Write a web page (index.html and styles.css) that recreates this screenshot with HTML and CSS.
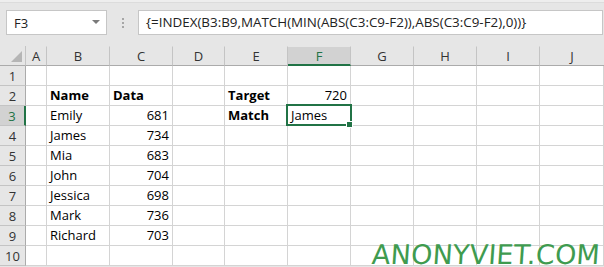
FILE: index.html
```html
<!DOCTYPE html>
<html>
<head>
<meta charset="utf-8">
<link rel="stylesheet" href="styles.css">
</head>
<body>
<div class="app">
  <div class="topstrip"></div>
  <div class="topbar">
    <div class="namebox"><span class="nb-text">F3</span><span class="nb-arrow"></span></div>
    <div class="sep"><span class="dot"></span><span class="dot"></span><span class="dot"></span></div>
    <div class="formula">{=INDEX(B3:B9,MATCH(MIN(ABS(C3:C9-F2)),ABS(C3:C9-F2),0))}</div>
  </div>
  <div class="sheet">
    <div class="hd corner"><span class="tri"></span></div>
    <div class="hd col">A</div><div class="hd col">B</div><div class="hd col">C</div><div class="hd col">D</div><div class="hd col">E</div><div class="hd col active-col">F</div><div class="hd col">G</div><div class="hd col">H</div><div class="hd col">I</div><div class="hd col last">J</div>

    <div class="hd row">1</div><div class="c"></div><div class="c"></div><div class="c"></div><div class="c"></div><div class="c"></div><div class="c"></div><div class="c"></div><div class="c"></div><div class="c"></div><div class="c"></div>

    <div class="hd row">2</div><div class="c"></div><div class="c b">Name</div><div class="c b">Data</div><div class="c"></div><div class="c b">Target</div><div class="c n">720</div><div class="c"></div><div class="c"></div><div class="c"></div><div class="c"></div>

    <div class="hd row active-row">3</div><div class="c"></div><div class="c">Emily</div><div class="c n">681</div><div class="c"></div><div class="c b">Match</div><div class="c sel">James</div><div class="c"></div><div class="c"></div><div class="c"></div><div class="c"></div>

    <div class="hd row">4</div><div class="c"></div><div class="c">James</div><div class="c n">734</div><div class="c"></div><div class="c"></div><div class="c"></div><div class="c"></div><div class="c"></div><div class="c"></div><div class="c"></div>

    <div class="hd row">5</div><div class="c"></div><div class="c">Mia</div><div class="c n">683</div><div class="c"></div><div class="c"></div><div class="c"></div><div class="c"></div><div class="c"></div><div class="c"></div><div class="c"></div>

    <div class="hd row">6</div><div class="c"></div><div class="c">John</div><div class="c n">704</div><div class="c"></div><div class="c"></div><div class="c"></div><div class="c"></div><div class="c"></div><div class="c"></div><div class="c"></div>

    <div class="hd row">7</div><div class="c"></div><div class="c">Jessica</div><div class="c n">698</div><div class="c"></div><div class="c"></div><div class="c"></div><div class="c"></div><div class="c"></div><div class="c"></div><div class="c"></div>

    <div class="hd row">8</div><div class="c"></div><div class="c">Mark</div><div class="c n">736</div><div class="c"></div><div class="c"></div><div class="c"></div><div class="c"></div><div class="c"></div><div class="c"></div><div class="c"></div>

    <div class="hd row">9</div><div class="c"></div><div class="c">Richard</div><div class="c n">703</div><div class="c"></div><div class="c"></div><div class="c"></div><div class="c"></div><div class="c"></div><div class="c"></div><div class="c"></div>

    <div class="hd row">10</div><div class="c"></div><div class="c"></div><div class="c"></div><div class="c"></div><div class="c"></div><div class="c"></div><div class="c"></div><div class="c"></div><div class="c"></div><div class="c"></div>
  </div>
  <div class="watermark">ANONYVIET.COM</div>
</div>
</body>
</html>
```
FILE: styles.css
```css
* { box-sizing: border-box; }
html, body { margin: 0; padding: 0; background: #ffffff; }
.app {
  position: relative;
  width: 604px;
  height: 267px;
  overflow: hidden;
  background: #e6e6e6;
  font-family: "Open Sans", "Liberation Sans", sans-serif;
}
.topstrip {
  height: 3px;
  background: #eeeeee;
  border-bottom: 1px solid #dcdcdc;
}
.topbar {
  height: 43px;
  display: flex;
  align-items: flex-start;
  padding-top: 7px;
}
.namebox {
  margin-left: 6px;
  width: 101px;
  height: 25px;
  background: #ffffff;
  border: 1px solid #c6c6c6;
  display: flex;
  align-items: center;
  justify-content: space-between;
  padding: 0 6px 0 7px;
  font-size: 13px;
  color: #222222;
}
.nb-arrow {
  width: 0;
  height: 0;
  border-left: 4px solid transparent;
  border-right: 4px solid transparent;
  border-top: 4px solid #7a7a7a;
  margin-bottom: 2px;
}
.sep {
  width: 31px;
  height: 25px;
  display: flex;
  flex-direction: column;
  align-items: center;
  justify-content: center;
  gap: 2px;
}
.dot {
  width: 2px;
  height: 2px;
  background: #a6a6a6;
}
.formula {
  flex: 1;
  margin-right: 1px;
  height: 25px;
  background: #ffffff;
  border: 1px solid #c6c6c6;
  padding-left: 7px;
  font-size: 13.4px;
  line-height: 23px;
  color: #222222;
  white-space: nowrap;
}
.sheet {
  display: grid;
  grid-template-columns: 26px 21px 63px 63px 52px 63px 63px 63px 63px 63px 64px;
  grid-template-rows: repeat(11, 20px);
  background: #ffffff;
  font-size: 13px;
  color: #000000;
}
.hd {
  background: #e6e6e6;
  color: #333333;
  display: flex;
  align-items: center;
  justify-content: center;
  font-size: 13px;
}
.hd.col {
  border-right: 1px solid #c4c4c4;
  border-bottom: 1px solid #ababab;
  border-top: 1px solid #e6e6e6;
}
.hd.col.last { border-right: none; }
.hd.corner {
  position: relative;
  border-right: 1px solid #c4c4c4;
  border-bottom: 1px solid #ababab;
}
.tri {
  position: absolute;
  right: 3px;
  bottom: 3px;
  width: 0;
  height: 0;
  border-left: 11px solid transparent;
  border-bottom: 11px solid #b5b5b5;
}
.hd.row {
  border-right: 1px solid #ababab;
  border-bottom: 1px solid #c4c4c4;
  justify-content: center;
  padding-top: 1px;
}
.active-col {
  background: #d2d2d2;
  color: #217346;
  border-bottom: 2px solid #217346 !important;
}
.active-row {
  background: #d2d2d2;
  color: #217346;
  border-right: 2px solid #217346 !important;
}
.c {
  border-right: 1px solid #d4d4d4;
  border-bottom: 1px solid #d4d4d4;
  padding: 0 3px;
  line-height: 19px;
  white-space: nowrap;
}
.c.b { font-weight: 700; }
.c.n { text-align: right; }
.c.sel { position: relative; }
.c.sel::after {
  content: "";
  position: absolute;
  left: -2px;
  top: -2px;
  right: -2px;
  bottom: -1px;
  border: 2px solid #217346;
}
.c.sel::before {
  content: "";
  position: absolute;
  right: -3px;
  bottom: -3px;
  width: 5px;
  height: 5px;
  background: #217346;
  border: 1px solid #ffffff;
  box-sizing: content-box;
  z-index: 2;
}
.watermark {
  position: absolute;
  left: 372px;
  top: 243px;
  font-family: "DejaVu Sans", sans-serif;
  font-size: 27px;
  line-height: 24px;
  letter-spacing: 0.2px;
  color: #3f9b4f;
  transform: skewX(-4deg);
  white-space: nowrap;
}
```
